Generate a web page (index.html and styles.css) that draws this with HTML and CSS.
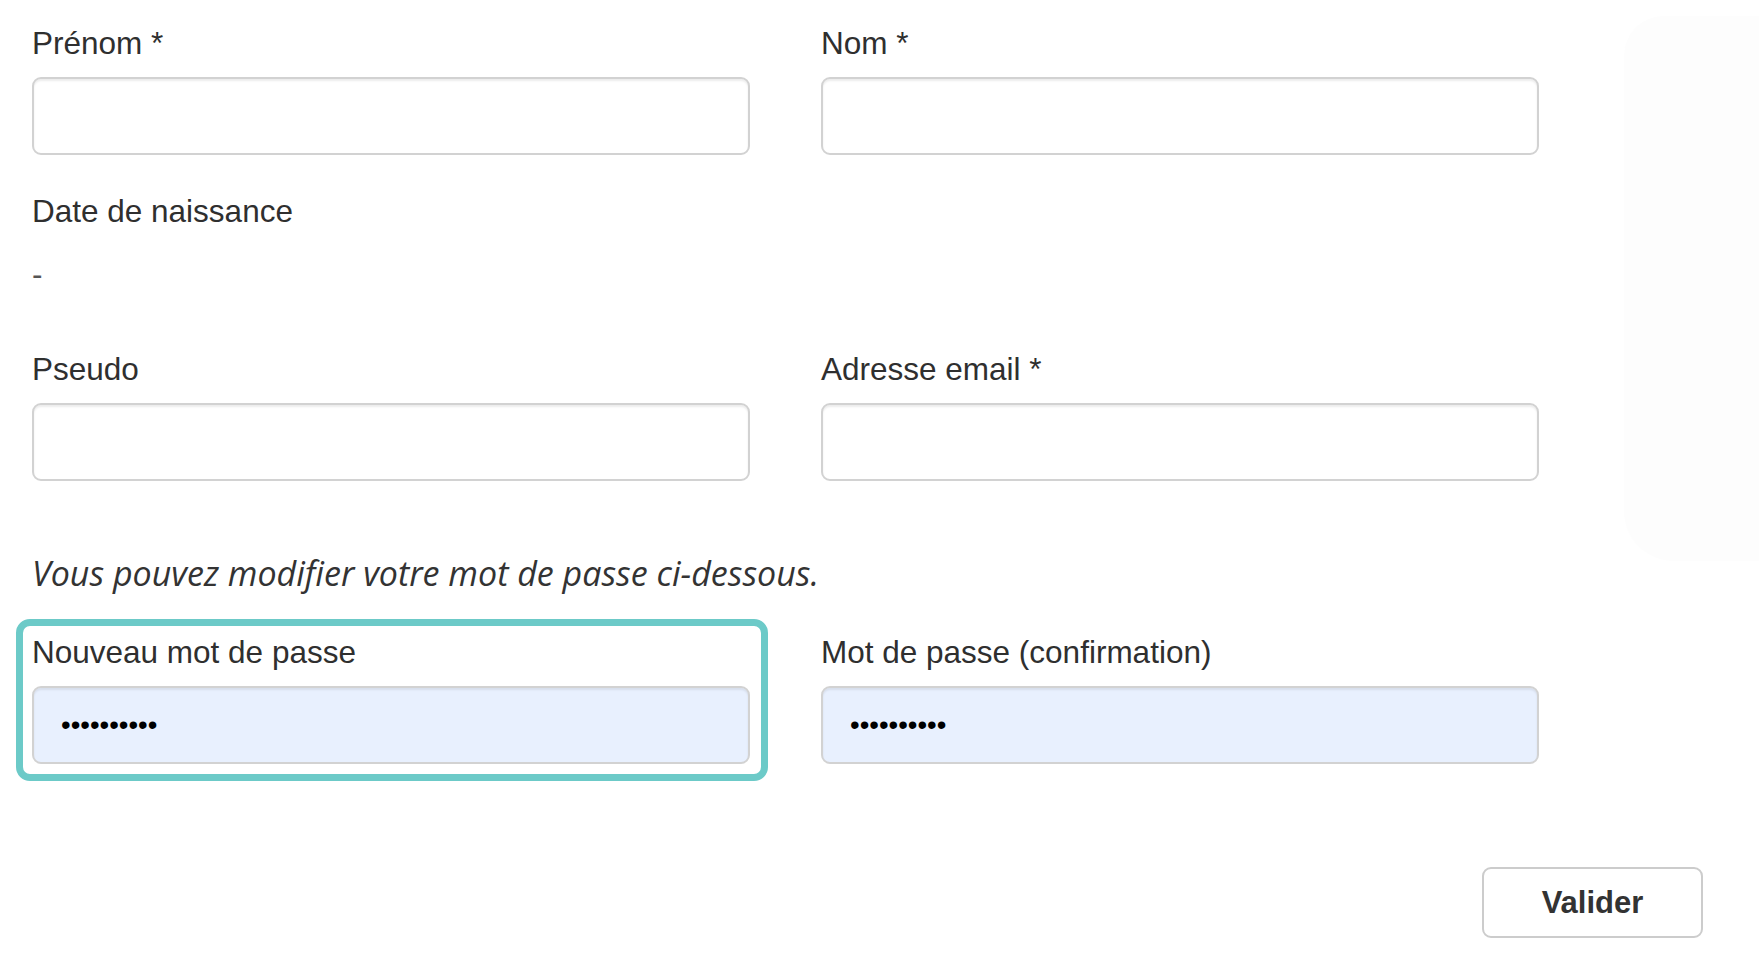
FILE: index.html
```html
<!DOCTYPE html>
<html lang="fr">
<head>
<meta charset="utf-8">
<title>Profil</title>
<link rel="stylesheet" href="styles.css">
</head>
<body>
<div class="backdrop" aria-hidden="true"></div>
<form class="page" onsubmit="return false">
  <div class="row">
    <div class="group">
      <label class="label" for="prenom">Prénom *</label>
      <input class="field" id="prenom" type="text">
    </div>
    <div class="group">
      <label class="label" for="nom">Nom *</label>
      <input class="field" id="nom" type="text">
    </div>
  </div>

  <div class="group">
    <div class="label">Date de naissance</div>
    <div class="static">-</div>
  </div>

  <div class="row">
    <div class="group">
      <label class="label" for="pseudo">Pseudo</label>
      <input class="field" id="pseudo" type="text">
    </div>
    <div class="group">
      <label class="label" for="email">Adresse email *</label>
      <input class="field" id="email" type="email">
    </div>
  </div>

  <p class="hint">Vous pouvez modifier votre mot de passe ci-dessous.</p>

  <div class="row">
    <div class="group highlight">
      <label class="label" for="pw1">Nouveau mot de passe</label>
      <input class="field autofill" id="pw1" type="password" value="motdepasse">
    </div>
    <div class="group">
      <label class="label" for="pw2">Mot de passe (confirmation)</label>
      <input class="field autofill" id="pw2" type="password" value="motdepasse">
    </div>
  </div>

  <div class="actions">
    <button class="btn" type="submit">Valider</button>
  </div>
</form>
</body>
</html>
```

FILE: styles.css
```css
* {
  box-sizing: border-box;
}

html, body {
  margin: 0;
  padding: 0;
  background: #ffffff;
}

body {
  position: relative;
  font-family: "Liberation Sans", Arial, sans-serif;
  font-size: 31.5px;
  line-height: 45px;
  color: #333333;
}

.backdrop {
  position: absolute;
  top: 16px;
  left: 1624px;
  width: 135px;
  height: 545px;
  background: #fdfdfd;
  border-radius: 40px 0 0 50px;
  z-index: 0;
}

.page {
  position: relative;
  z-index: 1;
  width: 1759px;
  padding: 20.6px 56px 0 32px;
}

.row {
  display: grid;
  grid-template-columns: 718px 718px;
  column-gap: 71px;
}

.group {
  display: flex;
  flex-direction: column;
  margin-bottom: 34px;
}

.label {
  display: block;
  font-size: 31.5px;
  line-height: 45px;
  font-weight: normal;
  margin-bottom: 11px;
  color: #2f2f2f;
}

.field {
  display: block;
  width: 100%;
  height: 78px;
  padding: 0 27px;
  font-family: "Liberation Sans", Arial, sans-serif;
  font-size: 27.5px;
  color: #000000;
  background: #ffffff;
  border: 2px solid #d2d2d2;
  border-radius: 9px;
  box-shadow: inset 0 2px 2px rgba(0, 0, 0, 0.075);
  outline: none;
}

.field.autofill {
  background: #e8f0fe;
}

.static {
  font-size: 31.5px;
  line-height: 45px;
  height: 68px;
  padding-top: 7px;
  color: #555555;
}

.hint {
  margin: 36px 0 34px 0;
  font-family: "Open Sans", "Liberation Sans", sans-serif;
  font-style: italic;
  font-size: 34px;
  line-height: 45px;
  color: #333333;
}

.highlight {
  position: relative;
}

.highlight::after {
  content: "";
  position: absolute;
  top: -10.6px;
  right: -18px;
  bottom: -17px;
  left: -16px;
  border: 7px solid #6ccac8;
  border-radius: 14px;
  pointer-events: none;
}

.actions {
  display: flex;
  justify-content: flex-end;
  margin-top: 69px;
}

.btn {
  font-family: "Liberation Sans", Arial, sans-serif;
  font-size: 31px;
  font-weight: bold;
  line-height: 45px;
  color: #333333;
  background: #ffffff;
  border: 2px solid #cccccc;
  border-radius: 9px;
  padding: 11px 0;
  width: 221px;
  text-align: center;
  cursor: pointer;
}
```
